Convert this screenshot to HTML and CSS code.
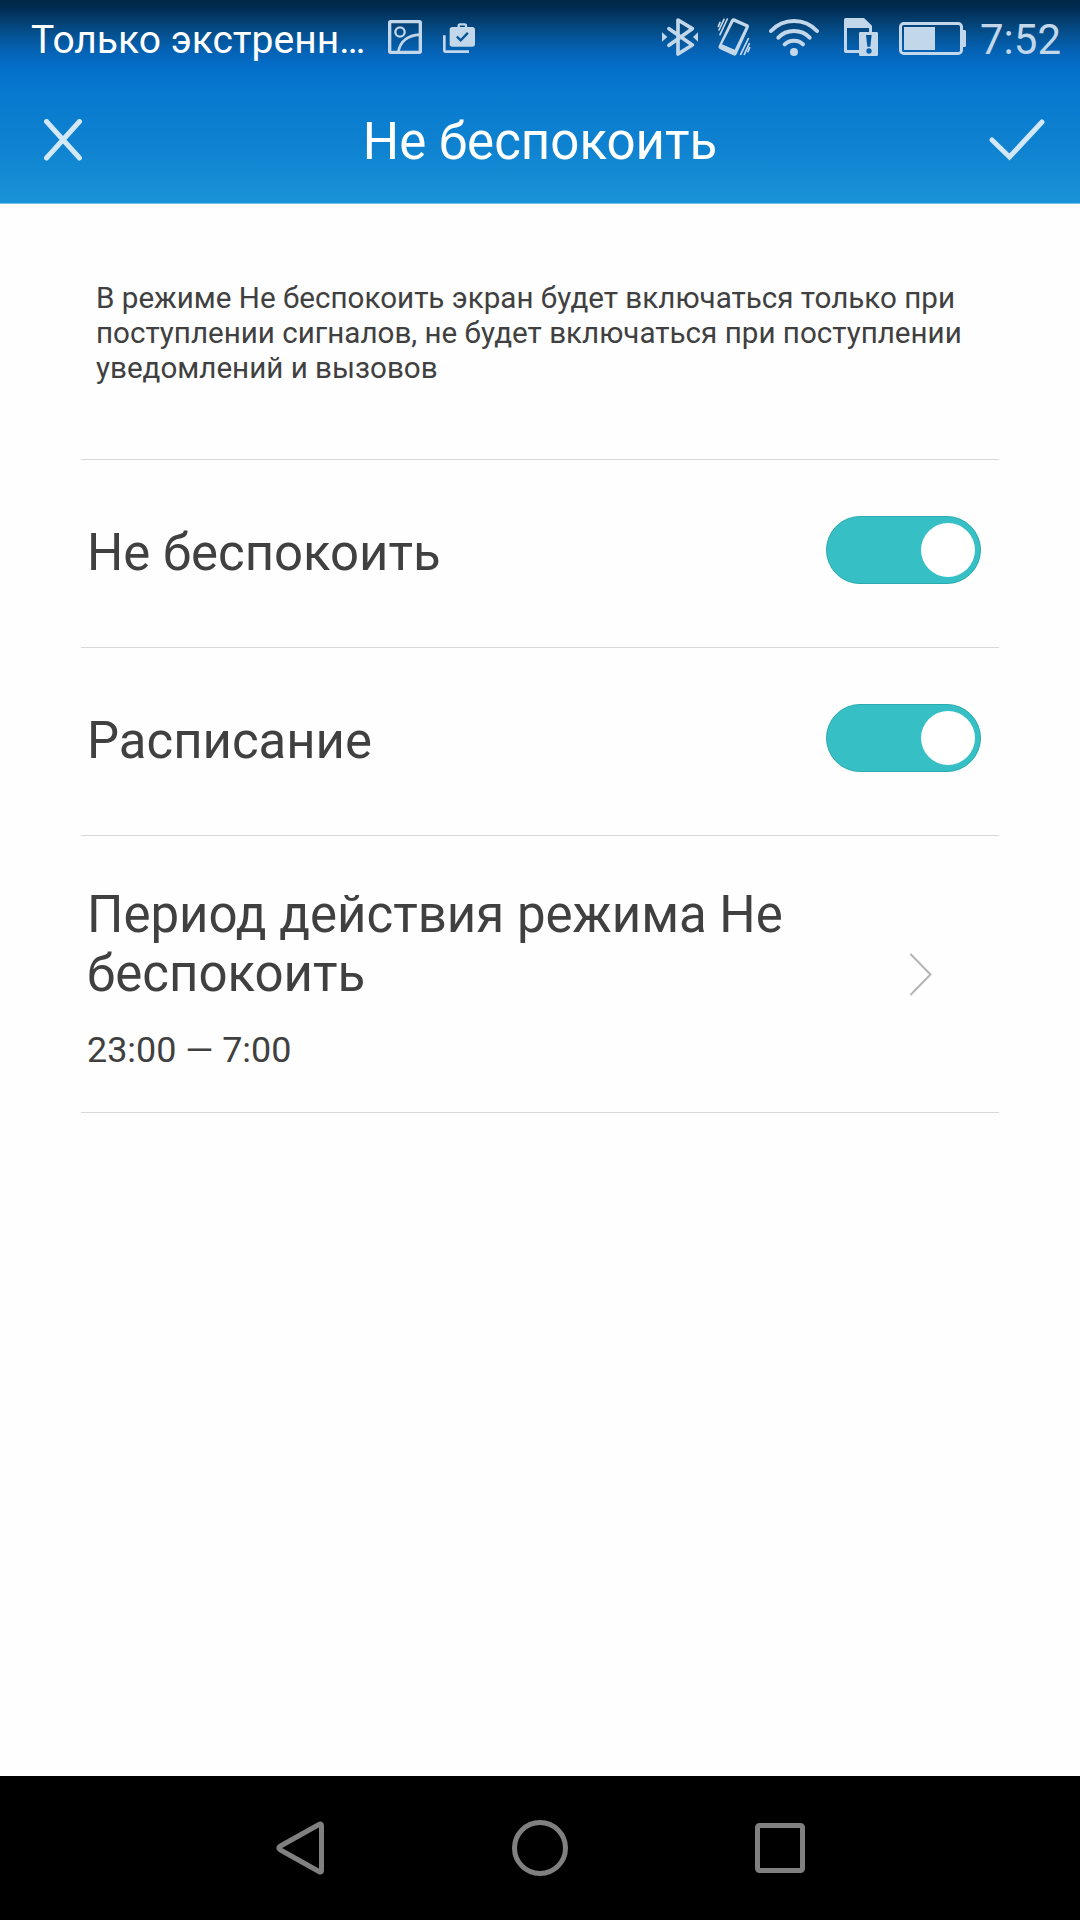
FILE: index.html
```html
<!DOCTYPE html>
<html lang="ru">
<head>
    <meta charset="UTF-8">
    <meta name="viewport" content="width=device-width, initial-scale=1.0">
    <title>Не беспокоить</title>
    <link rel="stylesheet" href="styles.css">
</head>
<body>
    <header class="header">
        <!-- Status bar -->
        <div class="status-bar">
            <span class="carrier">Только экстренн…</span>
            <svg class="icon-image" width="34" height="34" viewBox="0 0 102 102" fill="none" stroke="currentColor">
                <rect x="5" y="5" width="92" height="92" rx="3" stroke-width="10"/>
                <circle cx="36" cy="36" r="14" stroke-width="7"/>
                <path d="M31 96C37 62 63 46 96 44" stroke-width="8"/>
            </svg>
            <svg class="icon-bag" width="32" height="30" viewBox="0 0 96 90">
                <path d="M4 37V82Q4 86 8 86H78" fill="none" stroke="currentColor" stroke-width="8"/>
                <path d="M47 16V8Q47 4 51 4H65Q69 4 69 8V16" fill="none" stroke="currentColor" stroke-width="7"/>
                <path fill="currentColor" fill-rule="evenodd" d="M28 12H88Q96 12 96 20V63Q96 71 88 71H28Q20 71 20 63V20Q20 12 28 12ZM44 38L39 43L53 57L77 32L72 27L53 47Z"/>
            </svg>

            <div class="indicators">
                <svg width="36" height="38" viewBox="0 0 108 114">
                    <path d="M21 32L91 81L48 108V6L91 32L21 82" fill="none" stroke="currentColor" stroke-width="11" stroke-linecap="round" stroke-linejoin="round"/>
                    <path d="M0 43V71L16 57ZM108 43V71L93 57Z" fill="currentColor"/>
                </svg>
                <svg class="icon-vibrate" width="34" height="38" viewBox="0 0 102 114">
                    <path fill="currentColor" fill-rule="evenodd" d="M52 1L92 19Q98 22 95 29L59 108Q56 115 49 112L8 93Q3 90 5 84L42 6Q45 -1 52 1ZM50 11L15 79L53 95L86 27Z"/>
                    <path d="M9 13L4 25M21 4L6 36M31 3L9 50M94 62L71 109M97 77L82 109M98 89L93 101" fill="none" stroke="currentColor" stroke-width="5" stroke-linecap="round"/>
                </svg>
                <svg class="icon-wifi" width="50" height="38" viewBox="0 0 150 114" fill="none" stroke="currentColor" stroke-linecap="round">
                    <path d="M6 39Q34 9 75 9T144 39" stroke-width="12"/>
                    <path d="M28 59Q46 39 75 39T122 59" stroke-width="12"/>
                    <path d="M47 79Q58 68 75 68T102 79" stroke-width="12"/>
                    <circle cx="75" cy="102" r="12" fill="currentColor" stroke="none"/>
                </svg>
                <svg class="icon-sim" width="34" height="38" viewBox="0 0 102 114">
                    <path fill="currentColor" fill-rule="evenodd" d="M5 0H60L84 23V43H75V30H9V96H45V105H5Q0 105 0 100V5Q0 0 5 0Z"/>
                    <path fill="currentColor" fill-rule="evenodd" d="M49 42H98Q102 42 102 46V110Q102 114 98 114H49Q45 114 45 110V46Q45 42 49 42ZM66 51L70 86H79L83 51ZM75 91A8 8 0 1 0 75 107A8 8 0 1 0 75 91Z"/>
                </svg>
                <svg class="icon-battery" width="67" height="33" viewBox="0 0 201 99">
                    <rect x="4.500" y="4.500" width="183" height="90" rx="10" fill="none" stroke="currentColor" stroke-width="9"/>
                    <path d="M15 15H108V84H15ZM190 24H197Q201 24 201 28V71Q201 75 197 75H190Z" fill="currentColor"/>
                </svg>
                <span class="clock">7:52</span>
            </div>
        </div>

        <!-- Title bar -->
        <div class="title-bar">
            <svg width="38" height="42" viewBox="0 0 38 42">
                <path d="M2.500 2.500L35.500 39M35.500 2.500L2.500 39" fill="none" stroke="currentColor" stroke-width="5" stroke-linecap="round"/>
            </svg>
            <h1>Не беспокоить</h1>
            <svg width="56" height="42" viewBox="0 0 56 42">
                <path d="M3 21L20.500 38L53 3" fill="none" stroke="currentColor" stroke-width="5" stroke-linecap="round"/>
            </svg>
        </div>
    </header>

    <main class="settings">
        <p class="hint">В режиме Не беспокоить экран будет включаться только при поступлении сигналов, не будет включаться при поступлении уведомлений и вызовов</p>

        <div class="row">
            <span class="label">Не беспокоить</span>
            <span class="toggle"><span class="knob"></span></span>
        </div>

        <div class="row">
            <span class="label">Расписание</span>
            <span class="toggle"><span class="knob"></span></span>
        </div>

        <div class="row period">
            <div class="period-text">
                <div class="label">Период действия режима Не беспокоить</div>
                <div class="time">23:00 — 7:00</div>
            </div>
            <svg class="chevron" width="24" height="44" viewBox="0 0 24 44">
                <path d="M1.500 2L21.500 22.500L1.500 43" fill="none" stroke="currentColor" stroke-width="2"/>
            </svg>
        </div>
    </main>

    <!-- Navigation bar -->
    <nav class="nav-bar">
        <svg width="56" height="56" viewBox="0 0 56 56">
            <path d="M49.500 5.500V50.500Q49.500 53 47 51.500L8.500 30Q5 28 8.500 26L47 4.500Q49.500 3 49.500 5.500Z"/>
        </svg>
        <svg width="56" height="56" viewBox="0 0 56 56">
            <circle cx="28" cy="28" r="25.500"/>
        </svg>
        <svg width="56" height="56" viewBox="0 0 56 56">
            <rect x="5.500" y="5.500" width="45" height="45" rx="2"/>
        </svg>
    </nav>
</body>
</html>
```
FILE: styles.css
```css
/* Global styles */
body {
    display: flex;
    flex-direction: column;
    height: 1920px;
    margin: 0;
    font-family: Roboto, sans-serif;
    color: #404040;
    background-color: #fefefe;
}

svg {
    display: block;
    flex-shrink: 0;
}

/* Header */
.header {
    height: 203px;
    border-bottom: 1px solid #76bfe8;
    background: linear-gradient(#002848 0, #002c50 8px, #033e6e 20px, #045292 35px, #0461b3 50px, #046ec8 66px, #0779cf 90px, #0f83d0 150px, #1b93d8 203px);
}

.status-bar {
    display: flex;
    align-items: center;
    height: 74px;
    padding: 0 19px 0 31px;
    color: #c2d7ea;
}

.carrier {
    width: 357px;
    font-size: 39px;
    color: #fff;
    white-space: nowrap;
    padding-top: 6px;
}

.icon-bag {
    margin: 2px 0 0 21px;
}

.indicators {
    display: flex;
    align-items: center;
    margin-left: auto;
}

.icon-vibrate {
    margin-left: 19px;
}

.icon-wifi {
    margin-left: 18px;
}

.icon-sim {
    margin-left: 25px;
}

.icon-battery {
    margin: 3px 0 0 21px;
}

.clock {
    margin-left: 14px;
    padding-top: 6px;
    font-size: 42px;
    line-height: 48px;
}

.title-bar {
    display: flex;
    align-items: center;
    justify-content: space-between;
    height: 132px;
    padding: 0 35px 0 44px;
    color: #d3e8f7;
}

.title-bar h1 {
    margin: 0;
    padding: 2px 0 0 9px;
    font-size: 51px;
    font-weight: 400;
    color: #fff;
}

/* Settings list */
.settings {
    flex: 1;
    padding: 0 81px;
}

.hint {
    height: 178px;
    margin: 0;
    padding: 77px 15px 0;
    font-size: 29.6px;
    line-height: 35px;
    border-bottom: 1px solid #d8d8d8;
}

.row {
    display: flex;
    align-items: center;
    justify-content: space-between;
    height: 187px;
    padding: 0 18px 0 6px;
    border-bottom: 1px solid #d8d8d8;
}

.label {
    margin-bottom: 2px;
    font-size: 50.9px;
    line-height: 59px;
}

.toggle {
    display: flex;
    align-items: center;
    justify-content: flex-end;
    box-sizing: border-box;
    width: 155px;
    height: 68px;
    margin-bottom: 7px;
    padding-right: 5px;
    border: 1px solid #2aabb0;
    border-radius: 34px;
    background: #36c0c6;
}

.knob {
    width: 54px;
    height: 54px;
    border-radius: 50%;
    background: #fff;
}

.period {
    height: 276px;
    padding-right: 66px;
}

.period-text {
    width: 740px;
    padding-top: 7px;
}

.period .label {
    font-size: 51px;
}

.time {
    margin-top: 26px;
    font-size: 35.9px;
    line-height: 42px;
}

.chevron {
    color: #b4b4b4;
}

/* Navigation bar */
.nav-bar {
    display: flex;
    align-items: center;
    justify-content: center;
    gap: 184px;
    height: 144px;
    background: #000;
}

.nav-bar svg {
    fill: none;
    stroke: #808080;
    stroke-width: 5;
}
```
